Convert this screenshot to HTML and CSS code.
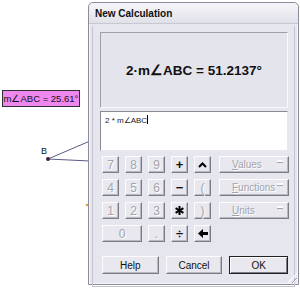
FILE: index.html
```html
<!DOCTYPE html>
<html lang="en">
<head>
    <meta charset="UTF-8">
    <title>New Calculation</title>
    <link rel="stylesheet" href="styles.css">
</head>
<body>
    <div class="sketch">
        <svg class="lines" width="300" height="288">
            <line x1="48" y1="159" x2="90" y2="141" stroke="#5a5a8a" stroke-width="1"/>
            <line x1="48" y1="159" x2="90" y2="161" stroke="#5a5a8a" stroke-width="1"/>
            <circle cx="48" cy="159" r="2" fill="#402040"/>
            <circle cx="87" cy="205" r="1.3" fill="#e0a040"/>
        </svg>
        <div class="measure">m∠ABC = 25.61°</div>
        <div class="point-label">B</div>
    </div>

    <div class="window">
        <div class="titlebar">New Calculation</div>
        <div class="body">
            <div class="display">2·m∠ABC = 51.2137°</div>
            <div class="input">2 * m∠ABC<span class="caret"></span></div>

            <div class="keypad">
                <button class="key off">7</button>
                <button class="key off">8</button>
                <button class="key off">9</button>
                <button class="key op">+</button>
                <button class="key op">
                    <svg width="9" height="6"><polyline points="1,5 4.5,1.5 8,5" fill="none" stroke="#000" stroke-width="2"/></svg>
                </button>
                <button class="menu"><span><u>V</u>alues</span><i></i></button>

                <button class="key off">4</button>
                <button class="key off">5</button>
                <button class="key off">6</button>
                <button class="key op">−</button>
                <button class="key off">(</button>
                <button class="menu"><span><u>F</u>unctions</span><i></i></button>

                <button class="key off">1</button>
                <button class="key off">2</button>
                <button class="key off">3</button>
                <button class="key op">
                    <svg width="9" height="9"><g stroke="#000" stroke-width="2"><line x1="4.5" y1="0" x2="4.5" y2="9"/><line x1="0.6" y1="2.2" x2="8.4" y2="6.8"/><line x1="0.6" y1="6.8" x2="8.4" y2="2.2"/></g></svg>
                </button>
                <button class="key off">)</button>
                <button class="menu"><span><u>U</u>nits</span><i></i></button>

                <button class="key off wide">0</button>
                <button class="key off">.</button>
                <button class="key op">÷</button>
                <button class="key op">
                    <svg width="10" height="9"><polygon points="0,4.5 5,0 5,3 10,3 10,6 5,6 5,9" fill="#000"/></svg>
                </button>
            </div>

            <div class="actions">
                <button class="btn">Help</button>
                <button class="btn">Cancel</button>
                <button class="btn default">OK</button>
            </div>
        </div>
        <div class="grip"></div>
    </div>
</body>
</html>
```

FILE: styles.css
```css
body {
    margin: 0;
    width: 300px;
    height: 288px;
    position: relative;
    background: #fff;
    font-family: "Liberation Sans", Arial, sans-serif;
    overflow: hidden;
}
.sketch .lines {
    position: absolute;
    left: 0;
    top: 0;
}
.measure {
    position: absolute;
    left: 2px;
    top: 90px;
    width: 76px;
    height: 15px;
    line-height: 15px;
    background: #ee88ee;
    border: 1px solid #303030;
    font-size: 9.5px;
    text-align: center;
    color: #111;
}
.point-label {
    position: absolute;
    left: 41px;
    top: 146px;
    font-size: 9px;
    color: #111;
}
.window {
    position: absolute;
    left: 88px;
    top: 2px;
    width: 209px;
    height: 281px;
    border: 1px solid #8c8c9c;
    border-radius: 5px 5px 0 0;
    background: #e6e6ee;
    box-shadow: inset 0 0 0 1px #f4f4f8;
}
.titlebar {
    height: 20px;
    line-height: 22px;
    padding-left: 6px;
    font-size: 10px;
    font-weight: bold;
    color: #111;
    background: linear-gradient(#f6f6fa, #e0e0e8);
    border-radius: 5px 5px 0 0;
    border-bottom: 1px solid #c8c8d2;
}
.body {
    margin: 2px 3px 0;
    padding: 6px 6px 0 7px;
    height: 254px;
    border: 1px solid #c4c4ce;
    border-top: none;
}
.display {
    height: 74px;
    border: 1px solid;
    border-color: #a0a0aa #fafafc #fafafc #a0a0aa;
    background: #e4e4ec;
    display: flex;
    align-items: center;
    justify-content: center;
    font-size: 13.5px;
    font-weight: bold;
    color: #111;
}
.input {
    margin-top: 3px;
    height: 40px;
    border: 1px solid;
    border-color: #8a8a94 #e8e8ee #e8e8ee #8a8a94;
    background: #fff;
    padding: 3px 4px;
    box-sizing: border-box;
    font-size: 8px;
    line-height: 10px;
    color: #222;
}
.caret {
    display: inline-block;
    width: 1px;
    height: 9px;
    background: #000;
    vertical-align: -1px;
}
.keypad {
    display: grid;
    grid-template-columns: repeat(5, 17px) 72px;
    grid-auto-rows: 17px;
    column-gap: 6px;
    row-gap: 6px;
    margin: 5px 0 0 2px;
}
button {
    font-family: "Liberation Sans", Arial, sans-serif;
    margin: 0;
    padding: 0;
    background: #e8e8ee;
    border: 1px solid;
    border-color: #fcfcfe #7c7c84 #7c7c84 #fcfcfe;
    box-shadow: inset -1px -1px 0 #b8b8c0;
    color: #111;
}
.key {
    display: flex;
    align-items: center;
    justify-content: center;
    font-size: 12px;
}
.key.off {
    color: #a4a4ac;
    text-shadow: 1px 1px 0 #fff;
}
.key.op {
    font-weight: bold;
    font-size: 13px;
}
.key.wide {
    grid-column: span 2;
}
.menu {
    margin-left: 2px;
    display: flex;
    align-items: center;
    justify-content: space-between;
    padding: 0 5px 0 12px;
    font-size: 10px;
    color: #a4a4ac;
    text-shadow: 1px 1px 0 #fff;
}
.menu i {
    width: 6px;
    height: 2px;
    margin-bottom: 6px;
    background: #fafafc;
    border-bottom: 1px solid #a4a4ac;
}
.actions {
    display: flex;
    gap: 7px;
    margin: 14px 0 0 2px;
}
.btn {
    width: 58px;
    height: 18px;
    font-size: 10px;
}
.default {
    width: 60px;
    border: 1px solid #222;
    box-shadow: inset 1px 1px 0 #fcfcfe, inset -1px -1px 0 #7c7c84;
}
.grip {
    position: absolute;
    right: 1px;
    bottom: 1px;
    width: 10px;
    height: 10px;
    background: repeating-linear-gradient(135deg, transparent 0 2px, #a0a0aa 2px 3px, #fff 3px 4px);
    clip-path: polygon(100% 0, 100% 100%, 0 100%);
}
```
